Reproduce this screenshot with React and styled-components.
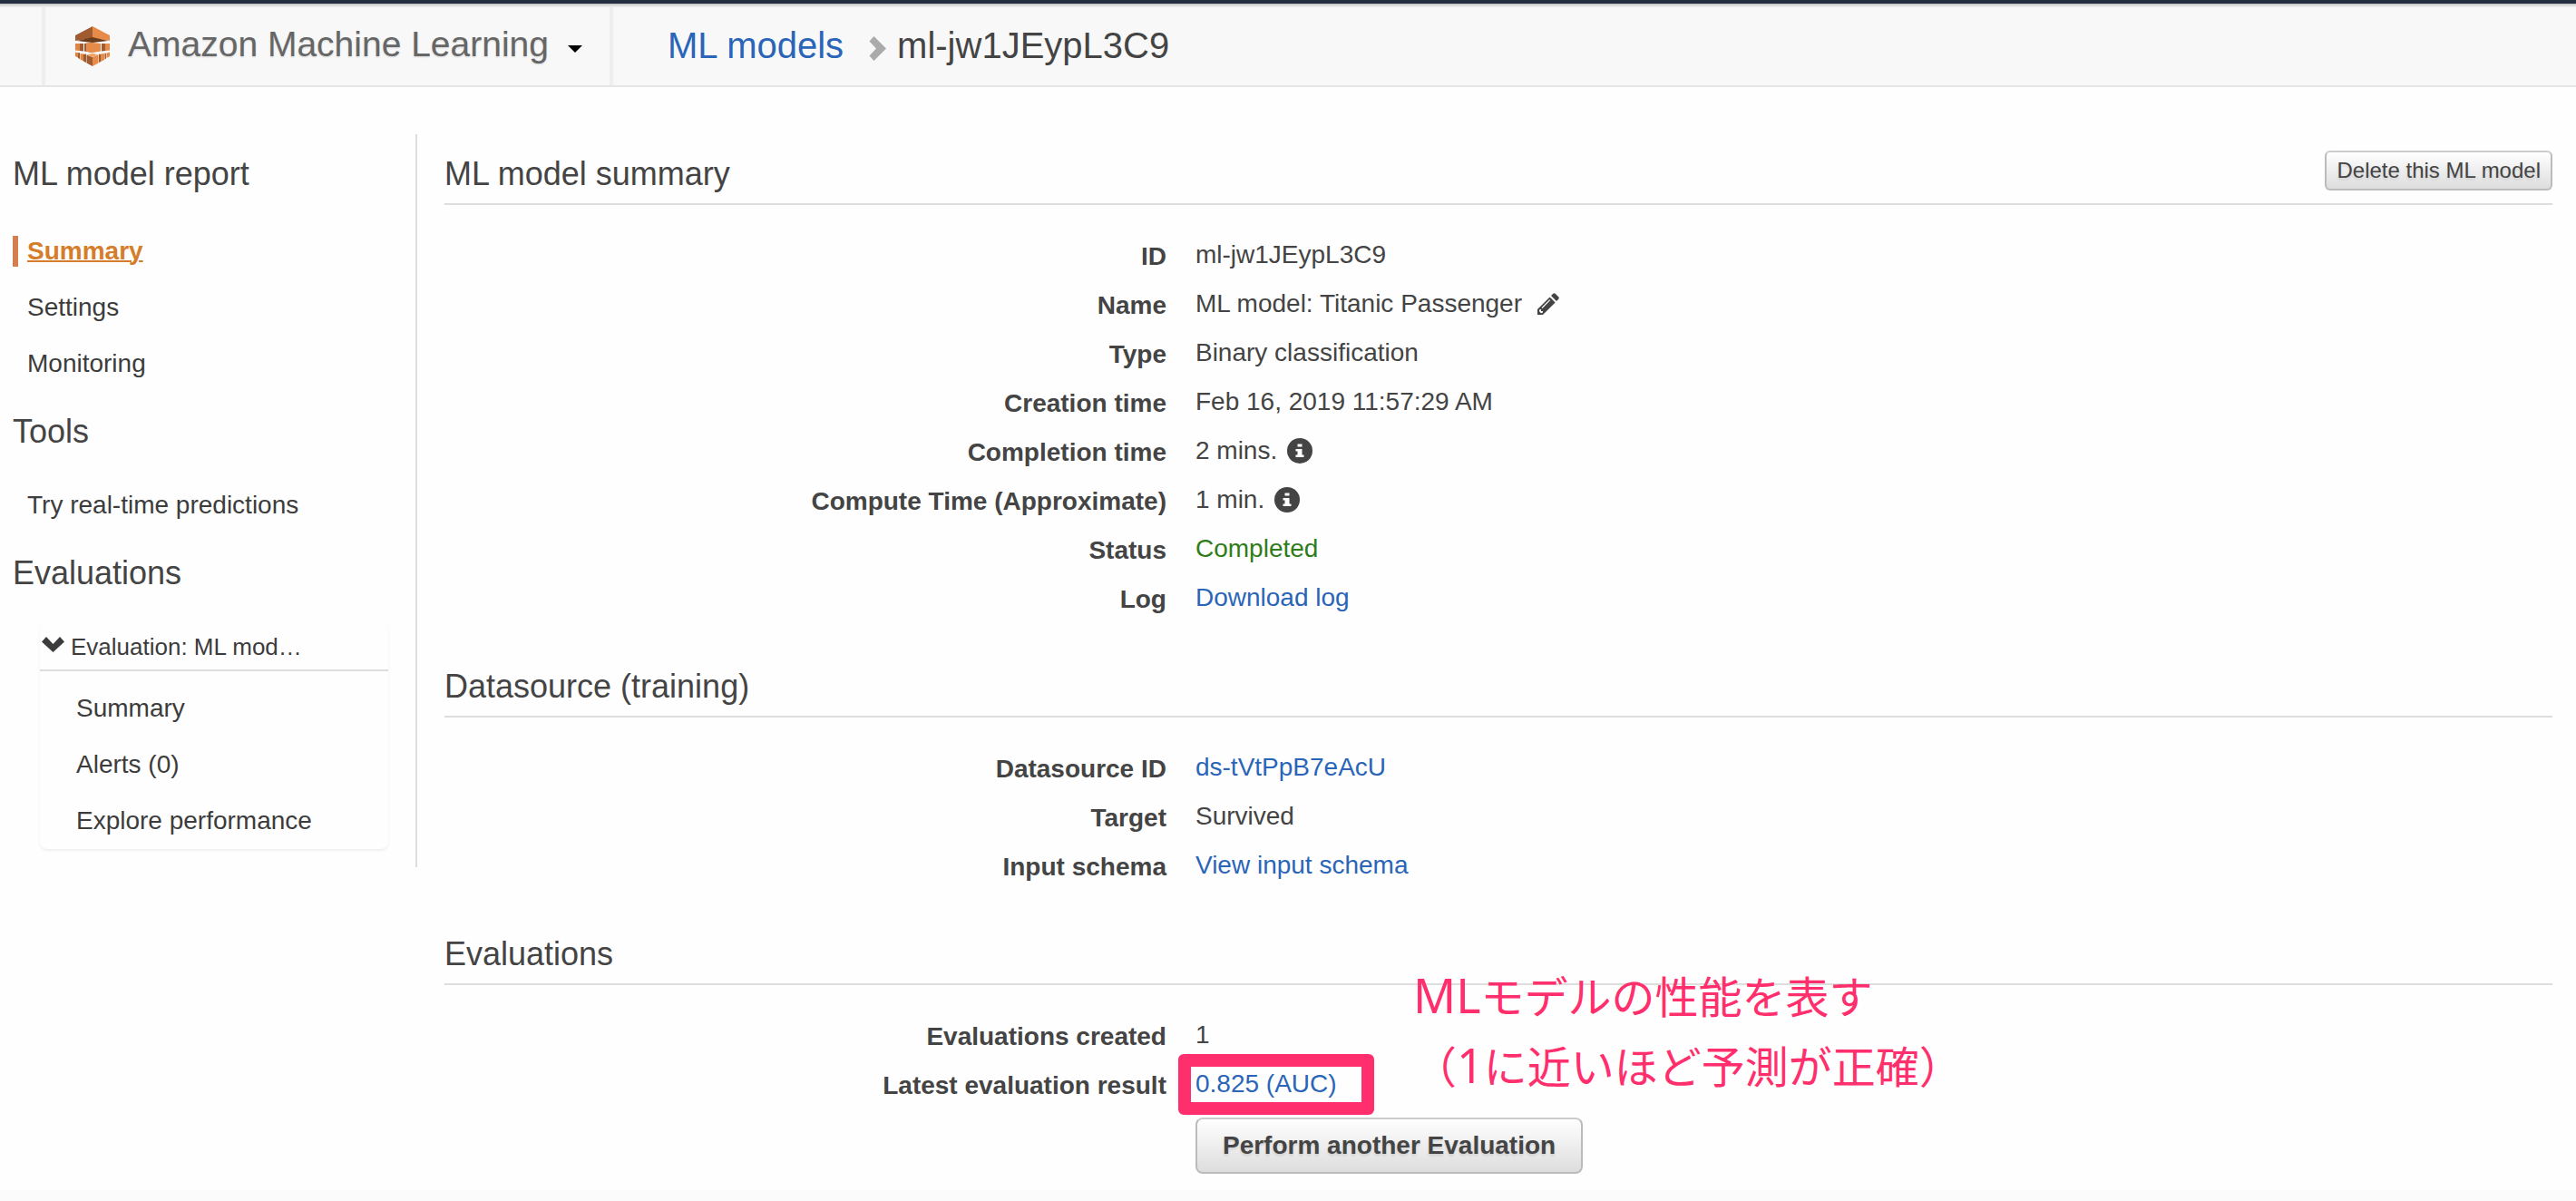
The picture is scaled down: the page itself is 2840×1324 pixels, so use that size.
import React from "react";
import styled, { createGlobalStyle } from "styled-components";

const color = {
  text: "#444444",
  link: "#2a65b8",
  rule: "#dddddd",
  accent: "#d67d2b",
  note: "#ff2f6d",
};

const GlobalStyle = createGlobalStyle`
  *, *::before, *::after { box-sizing: border-box; }
  body {
    margin: 0;
    background: #fefefe;
    color: ${color.text};
    font-family: "Liberation Sans", Arial, sans-serif;
    font-size: 28px;
  }
  h1, h2, h3, ul, dl, dd, p { margin: 0; padding: 0; }
  ul { list-style: none; }
  button { font-family: inherit; color: inherit; cursor: pointer; }
  svg { display: block; flex: none; }
`;

/* ---------- top bar ---------- */

const TopBar = styled.header`
  display: flex;
  height: 96px;
  border-top: 4px solid #232f3e;
  border-bottom: 2px solid #e5e5e5;
  background: linear-gradient(#cccccc 2px, #e8e8e8 2px, #e8e8e8 4px, #f8f8f8 4px);
  padding-top: 4px;
  padding-left: 46px;
`;

const ServiceButton = styled.button`
  display: flex;
  align-items: center;
  border: 0 solid #eeeeee;
  border-width: 0 4px;
  background: none;
  padding: 0 30px 0 33px;
  font-size: 39px;
  color: #666666;
`;

const ServiceName = styled.span`
  padding: 0 21px 4px 20px;
  line-height: 44px;
  text-shadow: 0 1px 2px rgba(0, 0, 0, 0.15);
`;

const CaretWrap = styled.span`
  padding-top: 6px;
`;

const Breadcrumb = styled.nav`
  display: flex;
  align-items: center;
  padding: 0 0 2px 60px;
  font-size: 40px;
`;

const CrumbArrow = styled.span`
  padding: 6px 12px 0 28px;
`;

const Link = styled.a`
  color: ${color.link};
  text-decoration: none;
`;

/* ---------- page frame ---------- */

const Body = styled.div`
  display: flex;
  align-items: flex-start;
`;

const Sidebar = styled.aside`
  flex: none;
  width: 460px;
  margin-top: 52px;
  padding: 22px 30px 20px 14px;
  border-right: 2px solid ${color.rule};
`;

const Main = styled.main`
  flex: 1;
  min-width: 0;
  padding: 70px 26px 18px 30px;
`;

const Footer = styled.footer`
  height: 12px;
  background: #fbfbfb;
`;

const Title = styled.h2`
  font-size: 36px;
  font-weight: 400;
  line-height: 44px;
`;

/* ---------- sidebar ---------- */

const MenuTitle = styled(Title)`
  margin-bottom: ${(p) => (p.$lead ? 46 : 42)}px;
`;

const Menu = styled.ul`
  display: flex;
  flex-direction: column;
  gap: 28px;
  margin-bottom: 36px;
`;

const MenuLink = styled.a`
  display: block;
  padding-left: 10px;
  border-left: 6px solid ${(p) => (p.$active ? "#d37f50" : "transparent")};
  line-height: 34px;
  color: ${(p) => (p.$active ? color.accent : "#3c3c3c")};
  font-weight: ${(p) => (p.$active ? 700 : 400)};
  text-decoration: ${(p) => (p.$active ? "underline" : "none")};
  text-decoration-thickness: 2px;
`;

const EvalBox = styled.div`
  margin: -11px 0 0 30px;
  border-radius: 8px;
  box-shadow: 0 2px 3px rgba(0, 0, 0, 0.06);
`;

const EvalToggle = styled.button`
  display: flex;
  align-items: center;
  gap: 7px;
  width: 100%;
  border: 0;
  border-bottom: 2px solid ${color.rule};
  background: none;
  padding: 11px 2px 8px;
  font-size: 26px;
  line-height: 34px;
  color: #3c3c3c;
`;

const SubMenu = styled(Menu)`
  margin: 0;
  padding: 24px 0 14px 24px;
`;

/* ---------- sections ---------- */

const Section = styled.section`
  & + & { margin-top: 43px; }
`;

const SectionHead = styled.div`
  display: flex;
  justify-content: space-between;
  align-items: flex-end;
  min-height: 60px;
  padding-bottom: 10px;
  border-bottom: 2px solid ${color.rule};
`;

const Details = styled.dl`
  padding-top: 30px;
`;

const Row = styled.div`
  display: grid;
  grid-template-columns: 34.25% 1fr;
  column-gap: 32px;
  align-items: start;
  min-height: 54px;
`;

const Label = styled.dt`
  text-align: right;
  font-weight: 700;
  line-height: 54px;
`;

const Value = styled.dd`
  position: relative;
  display: flex;
  align-items: center;
  gap: ${(p) => p.$gap || 11}px;
  padding-top: ${(p) => (p.$action ? 8 : 0)}px;
  line-height: 50px;
  color: ${(p) => (p.$ok ? "#2e7d1a" : "inherit")};
`;

const IconButton = styled.button`
  border: 0;
  background: none;
  padding: 0;
`;

const PushButton = styled.button`
  border: 2px solid #bbbbbb;
  border-top-color: #cccccc;
  border-radius: ${(p) => (p.$large ? 8 : 6)}px;
  background: linear-gradient(#ffffff, #dddddd);
  padding: 0 ${(p) => (p.$large ? 28 : 11)}px;
  font-size: ${(p) => (p.$large ? 28 : 24)}px;
  font-weight: ${(p) => (p.$large ? 700 : 400)};
  line-height: ${(p) => (p.$large ? 58 : 40)}px;
  text-shadow: 0 2px 3px rgba(0, 0, 0, 0.12);
`;

const HeadActions = styled.div`
  display: flex;
  padding-bottom: 4px;
`;

/* ---------- hand-made notes over the page ---------- */

const Frame = styled.span`
  position: absolute;
  left: -19px;
  top: -8px;
  width: 216px;
  height: 67px;
  border: 14px solid ${color.note};
  border-radius: 6px;
  pointer-events: none;
`;

const Note = styled.div`
  position: absolute;
  left: 240px;
  top: -112px;
  font-family: "Noto Sans CJK JP", sans-serif;
  font-size: 48px;
  font-weight: 400;
  line-height: 77px;
  color: ${color.note};
  white-space: nowrap;
`;

const NoteLine = styled.p`
  height: 77px;
`;

const Latin = styled.span`
  font-family: "Noto Sans", sans-serif;
  font-size: 52px;
`;

/* ---------- drawings ---------- */

const Logo = () => (
  <svg width="38" height="44" viewBox="0 0 38 44" aria-hidden="true">
    <path fill="#a05c30" d="M0 10 19 0v13L0 16z" />
    <path fill="#e78b48" d="M19 0l19 10v6L19 13z" />
    <path fill="#6b3d1c" d="M2 16l17-4 17 4-17 2z" />
    <path fill="#e08543" d="M0 19l5 0v8l-5-0.500z" />
    <path fill="#a05c30" d="M5 19h4v8.500L5 27z" />
    <path fill="#a05c30" d="M10 19l9-1v11l-9-1.500z" />
    <path fill="#e78b48" d="M12 18.500l7-0.500 9 1v8.500L19 29l-7-1.200z" />
    <path fill="#a05c30" d="M29 19h4v8l-4 0.500z" />
    <path fill="#e78b48" d="M33 19h5v7.500l-5 0.500z" />
    <path fill="#e08543" d="M0 28.500l4 1V35l-4-2z" />
    <path fill="#a05c30" d="M3 29.500l2-0.500v7l-2-1z" />
    <path fill="#e08543" d="M5.500 30l4 0.500v8l-4-2z" />
    <path fill="#a05c30" d="M9 31l3-0.500v9.500l-3-1.500z" />
    <path fill="#a05c30" d="M12.500 31.500L19 34v10l-6.500-3.500z" />
    <path fill="#e78b48" d="M19 34l6.500-2.500v9L19 44z" />
    <path fill="#f0a468" d="M12.500 31.500l6.500-1.700 6.500 1.700L19 34z" />
    <path fill="#e78b48" d="M28 30.500l4-0.500v7l-4 2z" />
    <path fill="#a05c30" d="M26 30.500l2 0.500v8l-2 1z" />
    <path fill="#a05c30" d="M32.500 29.500l1.500 0.500v5.500l-1.500 1z" />
    <path fill="#e78b48" d="M34.500 29.500l3.500-1V33l-3.500 2z" />
  </svg>
);

const Caret = () => (
  <svg width="16" height="8" viewBox="0 0 16 8" aria-hidden="true">
    <path fill="#000" d="M0 0h16L8 8z" />
  </svg>
);

const ArrowRight = () => (
  <svg width="19" height="27" viewBox="0 0 19 27" aria-hidden="true">
    <path fill="#aaaaaa" d="M0.500 5.500L5.500 0 19 13.500 5.500 27 0.500 21.500 8 13.500z" />
  </svg>
);

const ArrowDown = () => (
  <svg width="25" height="34" viewBox="0 0 25 34" aria-hidden="true">
    <path fill="#3c3c3c" d="M0 11.500L5 6l7.500 8L20 6l5 5.500L12.500 23z" />
  </svg>
);

const Pencil = () => (
  <svg width="24" height="24" viewBox="0 0 24 24" aria-hidden="true">
    <path
      fill="#444"
      d="M15 3l2-2c1-1 2-1 3 0l3 3c1 1 1 2 0 3l-2 2zM13.600 4.400l6 6L6 24H0v-6z"
    />
    <path stroke="#fefefe" strokeWidth="1.200" d="M5 16.500L13.800 7.700" />
    <path fill="#fefefe" d="M2.800 18l1.200 0v2h2v1.200L5 22.300 3.600 22 2.200 20.400 2 18.900z" />
  </svg>
);

const Info = () => (
  <svg width="28" height="28" viewBox="0 0 28 28" aria-hidden="true">
    <circle cx="14" cy="14" r="14" fill="#444" />
    <path fill="#fff" d="M11.500 6.500h5v3h-5zM9.500 12h7v6.500h2V21h-9v-2.500h2v-4h-2z" />
  </svg>
);

/* ---------- page ---------- */

const InfoButton = ({ label }) => (
  <IconButton type="button" aria-label={label}>
    <Info />
  </IconButton>
);

const Field = ({ label, children, ...rest }) => (
  <Row>
    <Label>{label}</Label>
    <Value {...rest}>{children}</Value>
  </Row>
);

const MenuItems = ({ as: List = Menu, items }) => (
  <List>
    {items.map((item) => (
      <li key={item.text}>
        <MenuLink href="#" $active={item.active}>
          {item.text}
        </MenuLink>
      </li>
    ))}
  </List>
);

export default function App() {
  return (
    <>
      <GlobalStyle />
      <TopBar>
        <ServiceButton type="button">
          <Logo />
          <ServiceName>Amazon Machine Learning</ServiceName>
          <CaretWrap>
            <Caret />
          </CaretWrap>
        </ServiceButton>
        <Breadcrumb>
          <Link href="#">ML models</Link>
          <CrumbArrow>
            <ArrowRight />
          </CrumbArrow>
          <span>ml-jw1JEypL3C9</span>
        </Breadcrumb>
      </TopBar>

      <Body>
        <Sidebar>
          <MenuTitle $lead>ML model report</MenuTitle>
          <MenuItems
            items={[
              { text: "Summary", active: true },
              { text: "Settings" },
              { text: "Monitoring" },
            ]}
          />
          <MenuTitle>Tools</MenuTitle>
          <MenuItems items={[{ text: "Try real-time predictions" }]} />
          <MenuTitle>Evaluations</MenuTitle>
          <EvalBox>
            <EvalToggle type="button" aria-expanded="true">
              <ArrowDown />
              Evaluation: ML mod…
            </EvalToggle>
            <MenuItems
              as={SubMenu}
              items={[
                { text: "Summary" },
                { text: "Alerts (0)" },
                { text: "Explore performance" },
              ]}
            />
          </EvalBox>
        </Sidebar>

        <Main>
          <Section>
            <SectionHead>
              <Title>ML model summary</Title>
              <HeadActions>
                <PushButton type="button">Delete this ML model</PushButton>
              </HeadActions>
            </SectionHead>
            <Details>
              <Field label="ID">ml-jw1JEypL3C9</Field>
              <Field label="Name" $gap={17}>
                ML model: Titanic Passenger
                <IconButton type="button" aria-label="Edit name">
                  <Pencil />
                </IconButton>
              </Field>
              <Field label="Type">Binary classification</Field>
              <Field label="Creation time">Feb 16, 2019 11:57:29 AM</Field>
              <Field label="Completion time">
                2 mins.
                <InfoButton label="About completion time" />
              </Field>
              <Field label="Compute Time (Approximate)">
                1 min.
                <InfoButton label="About compute time" />
              </Field>
              <Field label="Status" $ok>
                Completed
              </Field>
              <Field label="Log">
                <Link href="#">Download log</Link>
              </Field>
            </Details>
          </Section>

          <Section>
            <SectionHead>
              <Title>Datasource (training)</Title>
            </SectionHead>
            <Details>
              <Field label="Datasource ID">
                <Link href="#">ds-tVtPpB7eAcU</Link>
              </Field>
              <Field label="Target">Survived</Field>
              <Field label="Input schema">
                <Link href="#">View input schema</Link>
              </Field>
            </Details>
          </Section>

          <Section>
            <SectionHead>
              <Title>Evaluations</Title>
            </SectionHead>
            <Details>
              <Field label="Evaluations created">1</Field>
              <Field label="Latest evaluation result">
                <Link href="#">0.825 (AUC)</Link>
                <Frame />
                <Note lang="ja">
                  <NoteLine>
                    <Latin>ML</Latin>モデルの性能を表す
                  </NoteLine>
                  <NoteLine>
                    （<Latin>1</Latin>に近いほど予測が正確）
                  </NoteLine>
                </Note>
              </Field>
              <Row>
                <Label />
                <Value $action>
                  <PushButton type="button" $large>
                    Perform another Evaluation
                  </PushButton>
                </Value>
              </Row>
            </Details>
          </Section>
        </Main>
      </Body>
      <Footer />
    </>
  );
}
